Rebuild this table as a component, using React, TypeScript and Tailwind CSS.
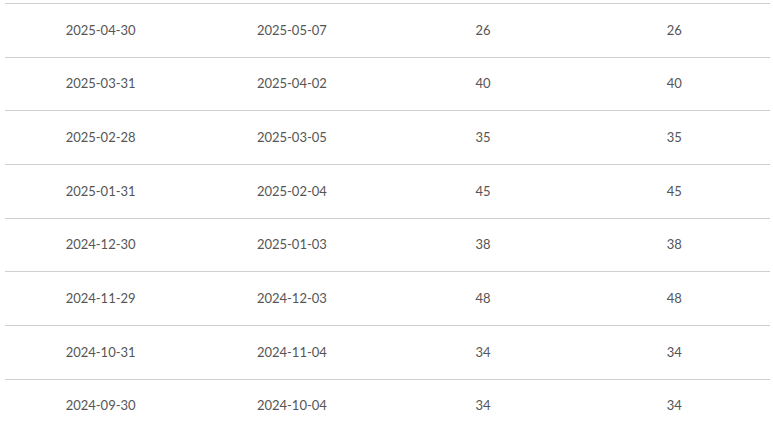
const rows: [string, string, number, number][] = [
  ["2025-04-30", "2025-05-07", 26, 26],
  ["2025-03-31", "2025-04-02", 40, 40],
  ["2025-02-28", "2025-03-05", 35, 35],
  ["2025-01-31", "2025-02-04", 45, 45],
  ["2024-12-30", "2025-01-03", 38, 38],
  ["2024-11-29", "2024-12-03", 48, 48],
  ["2024-10-31", "2024-11-04", 34, 34],
  ["2024-09-30", "2024-10-04", 34, 34],
];

export default function App() {
  return (
    <div className="h-[426px] overflow-hidden bg-white pt-[3px] pl-[5px] pr-[3px] font-['Lato',sans-serif] text-[13px] text-[#555]">
      {rows.map((r, i) => (
        <div
          key={i}
          className="grid h-[53.67px] grid-cols-4 items-center border-t border-[#cfcfcf]"
        >
          {r.map((c, j) => (
            <div key={j} className="text-center">
              {c}
            </div>
          ))}
        </div>
      ))}
    </div>
  );
}
